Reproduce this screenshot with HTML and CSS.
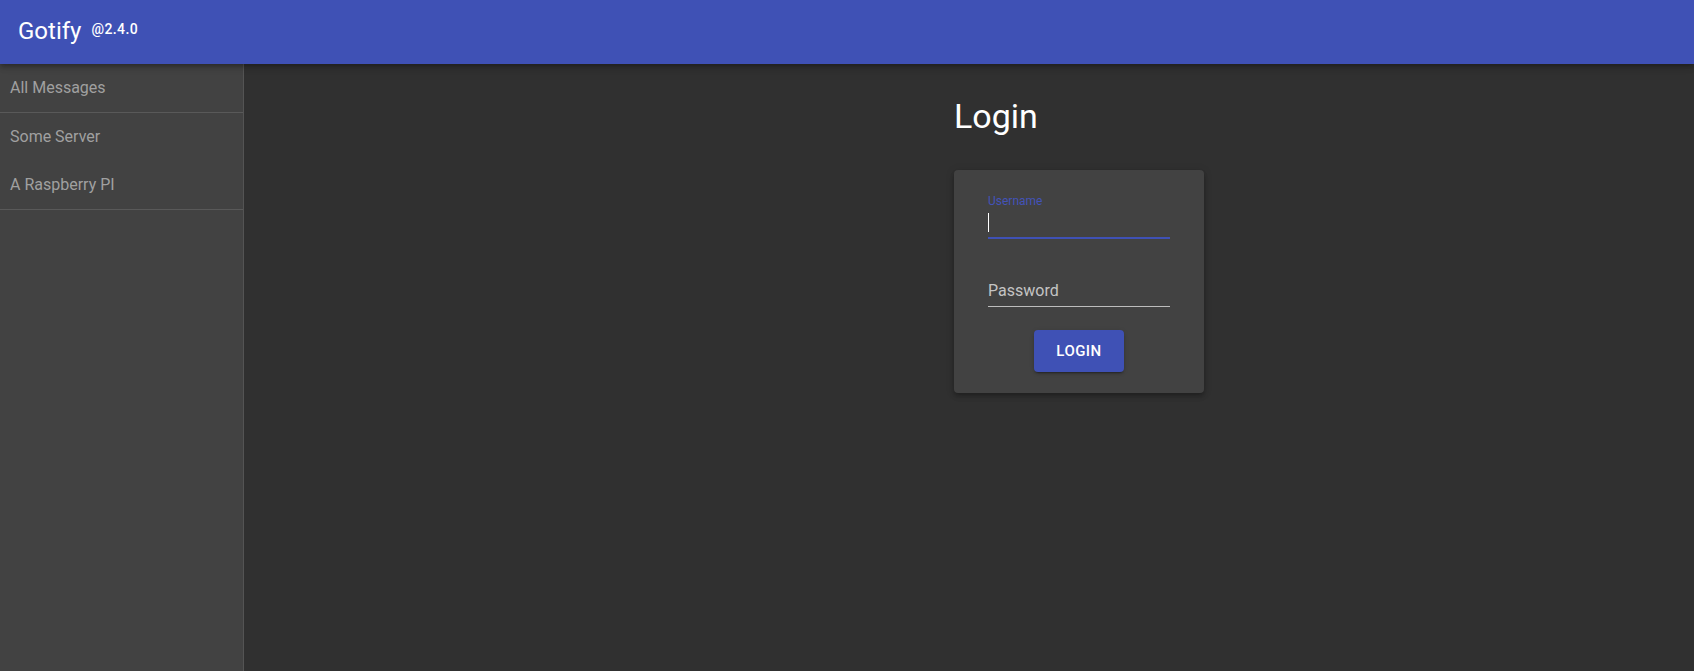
FILE: index.html
```html
<!DOCTYPE html>
<html lang="en">
<head>
<meta charset="utf-8">
<title>Gotify</title>
<link rel="stylesheet" href="styles.css">
</head>
<body>
<div class="app">
  <header class="appbar">
    <span class="title">Gotify</span><a class="version" href="#">@2.4.0</a>
  </header>
  <div class="layout">
    <nav class="drawer">
      <div class="item item-all">All Messages</div>
      <div class="group">
        <div class="item">Some Server</div>
        <div class="item">A Raspberry PI</div>
      </div>
    </nav>
    <main class="main">
      <div class="page">
        <h1 class="heading">Login</h1>
        <div class="card">
          <form class="form">
            <div class="field field-dense">
              <label class="label label-focused">Username</label>
              <div class="input input-focused"><span class="caret"></span></div>
            </div>
            <div class="field field-normal">
              <div class="input input-idle"><span class="placeholder">Password</span></div>
            </div>
            <div class="actions">
              <button type="button" class="button">Login</button>
            </div>
          </form>
        </div>
      </div>
    </main>
  </div>
</div>
</body>
</html>
```

FILE: styles.css
```css
* { box-sizing: border-box; }
html, body {
  margin: 0;
  padding: 0;
  height: 100%;
  background: #303030;
  font-family: Roboto, "Liberation Sans", Arial, sans-serif;
}
.app {
  display: flex;
  flex-direction: column;
  height: 100vh;
}
.appbar {
  position: relative;
  z-index: 2;
  flex: 0 0 64px;
  height: 64px;
  display: flex;
  align-items: center;
  padding: 0 0 3px 18px;
  background: #3f51b5;
  color: #fff;
  box-shadow: 0 2px 4px -1px rgba(0,0,0,.2), 0 4px 5px 0 rgba(0,0,0,.14), 0 1px 10px 0 rgba(0,0,0,.12);
}
.title {
  font-size: 24px;
  font-weight: 400;
  line-height: 28px;
}
.version {
  color: #fff;
  text-decoration: none;
  font-size: 14px;
  font-weight: 500;
  letter-spacing: 0.4px;
  margin-left: 10px;
  line-height: 28px;
  align-self: center;
  margin-top: -4px;
}
.layout {
  flex: 1 1 auto;
  display: flex;
  min-height: 0;
}
.drawer {
  flex: 0 0 244px;
  width: 244px;
  background: #424242;
  border-right: 1px solid #545454;
}
.item {
  box-sizing: content-box;
  height: 48px;
  line-height: 48px;
  padding-left: 10px;
  font-size: 16px;
  color: #a0a0a0;
}
.item-all,
.group {
  border-bottom: 1px solid #595959;
}
.main {
  flex: 1 1 auto;
  padding: 32px 0 0 710px;
}
.page {
  width: 250px;
}
.heading {
  margin: 0 0 34px;
  font-size: 34px;
  font-weight: 400;
  line-height: 40px;
  color: #fff;
}
.card {
  width: 250px;
  background: #424242;
  border-radius: 4px;
  padding: 25px 34px 16px;
  box-shadow: 0 2px 4px -1px rgba(0,0,0,.2), 0 4px 5px 0 rgba(0,0,0,.14), 0 1px 10px 0 rgba(0,0,0,.12);
}
.form {
  display: flex;
  flex-direction: column;
}
.field {
  display: flex;
  flex-direction: column;
}
.field-normal {
  margin-top: 36px;
}
.label {
  font-size: 12px;
  line-height: 12px;
  height: 12px;
}
.label-focused {
  color: #4353b9;
}
.input {
  height: 32px;
  padding: 6px 0 7px;
  display: flex;
  align-items: center;
}
.input-focused {
  border-bottom: 2px solid #3f51b5;
  padding-bottom: 5px;
}
.input-idle {
  border-bottom: 1px solid #bdbdbd;
  padding-bottom: 6px;
}
.caret {
  display: block;
  width: 1px;
  height: 19px;
  background: #fff;
}
.placeholder {
  font-size: 16px;
  line-height: 19px;
  color: #c4c4c4;
  margin-top: -1px;
}
.actions {
  display: flex;
  justify-content: center;
  margin-top: 23px;
  margin-bottom: 5px;
}
.button {
  height: 42px;
  padding: 8px 22px;
  border: 0;
  border-radius: 4px;
  background: #3f51b5;
  color: #fff;
  font-family: Roboto, "Liberation Sans", Arial, sans-serif;
  font-size: 15px;
  font-weight: 500;
  letter-spacing: 0.46px;
  text-transform: uppercase;
  line-height: 26px;
  box-shadow: 0 3px 1px -2px rgba(0,0,0,.2), 0 2px 2px 0 rgba(0,0,0,.14), 0 1px 5px 0 rgba(0,0,0,.12);
}
```
